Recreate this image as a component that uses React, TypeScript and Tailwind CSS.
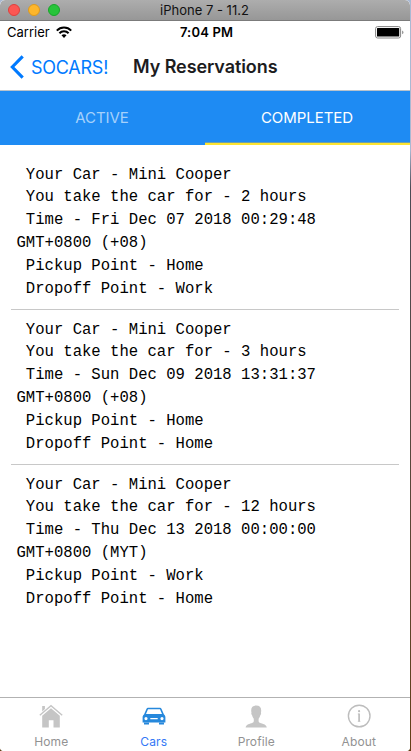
import React from 'react';

const reservations = [
  { hours: '2', time: 'Fri Dec 07 2018 00:29:48', zone: '(+08)', pickup: 'Home', dropoff: 'Work' },
  { hours: '3', time: 'Sun Dec 09 2018 13:31:37', zone: '(+08)', pickup: 'Home', dropoff: 'Home' },
  { hours: '12', time: 'Thu Dec 13 2018 00:00:00', zone: '(MYT)', pickup: 'Work', dropoff: 'Home' },
];

function TitleBar() {
  return (
    <div className="grid h-[21px] grid-cols-3 items-center rounded-t-[5px] border-b border-[#7b7b7b] bg-linear-to-b from-[#adadad] to-[#979797]">
      <div className="flex gap-2 pl-2">
        <span className="size-3 rounded-full border border-[#df403d] bg-[#fc5753]" />
        <span className="size-3 rounded-full border border-[#de9a1c] bg-[#fdb62b]" />
        <span className="size-3 rounded-full border border-[#17a52a] bg-[#27c43a]" />
      </div>
      <span className="whitespace-nowrap pr-px text-center text-[13px] leading-5 text-[#111]">iPhone 7 - 11.2</span>
    </div>
  );
}

function StatusBar() {
  return (
    <div className="grid h-[22px] grid-cols-3 items-center pl-[7px] pr-1.5">
      <div className="flex items-center gap-1.5">
        <span className="text-[13px] leading-5">Carrier</span>
        <svg width="16" height="12" viewBox="0 0 16 12" fill="none" stroke="#000" strokeWidth="2">
          <path d="M.8 4.6C4.7.4 11.3.4 15.2 4.6" />
          <path d="M3.4 7.3c2.5-2.7 6.7-2.7 9.2 0" />
          <path d="M5.5 9.3 8 11.9l2.5-2.6c-1.4-1.3-3.6-1.3-5 0Z" fill="#000" stroke="none" />
        </svg>
      </div>
      <span className="whitespace-nowrap pl-0.5 text-center text-[13px] font-semibold leading-5 tracking-[0.15px]">7:04 PM</span>
      <svg className="justify-self-end" width="29" height="13" viewBox="0 0 29 13">
        <rect x=".6" y=".6" width="25" height="11.4" rx="2" fill="#fff" stroke="#858585" />
        <rect x="2" y="2" width="22.2" height="8.6" rx=".6" />
        <path d="M27.2 4.5c1.7.6 1.7 3.2 0 3.8Z" fill="#858585" />
      </svg>
    </div>
  );
}

function Header() {
  return (
    <header className="flex h-12 items-center border-b border-[#b9c3cc] pl-[10px]">
      <svg width="14" height="24" viewBox="0 0 14 24" fill="none" stroke="#007aff" strokeWidth="3.1">
        <path d="M12.7 1.3 2.3 12l10.4 10.7" />
      </svg>
      <span className="ml-[7px] w-[102px] whitespace-nowrap pt-px text-[18px] tracking-[-0.25px] text-[#007aff]">SOCARS!</span>
      <h1 className="whitespace-nowrap text-[18px] font-semibold tracking-[-0.08px] text-[#1c1c1e]">My Reservations</h1>
    </header>
  );
}

function Tabs() {
  return (
    <div className="grid h-[54px] grid-cols-2 bg-[#1e8bf3] text-[15px] text-white">
      <div className="flex items-center justify-center pr-px tracking-[-0.1px] text-[#a5d1fb]">ACTIVE</div>
      <div className="flex items-center justify-center border-b-2 border-[#fde431] pt-0.5 pr-px tracking-[-0.05px] shadow-[inset_0_-1px_#6f9fa8]">COMPLETED</div>
    </div>
  );
}

const homeIcon = (
  <svg width="24" height="24" viewBox="0 0 24 24" fill="#c5c5c5">
    <path d="M3.2 2h2.7v3L3.2 7.6Z" />
    <path d="M.8 11.2 12 1.7l11.2 9.5" fill="none" stroke="#c5c5c5" strokeWidth="1.4" />
    <path d="M3.2 11.8 12 4.3l8.8 7.5v11.8h-6.3v-7.4H9.8v7.4H3.2Z" />
  </svg>
);

const carIcon = (
  <svg width="24" height="24" viewBox="0 0 24 24" fill="#2688dc">
    <path fillRule="evenodd" d="M6.6 3.8h10.8c1.1 0 1.9.5 2.3 1.4l2.3 5.2c.9.7 1.4 1.6 1.4 2.8v5.3H.6v-5.3c0-1.2.5-2.1 1.4-2.8l2.3-5.2c.4-.9 1.2-1.4 2.3-1.4Zm-.6 1.5L4 9.9h16l-2-4.6ZM4 13a1.6 1.6 0 1 0 0 3.2A1.6 1.6 0 0 0 4 13Zm16 0a1.6 1.6 0 1 0 0 3.2 1.6 1.6 0 0 0 0-3.2ZM8.3 14v1.3h7.4V14Z" />
    <path d="M2 18.4h5v2.1H2Zm15 0h5v2.1h-5Z" />
  </svg>
);

const profileIcon = (
  <svg width="24" height="24" viewBox="0 0 24 24" fill="#c5c5c5">
    <path d="M12.2 1.5c-3.2 0-5 1.9-5 4.7 0 1 .1 1.9.3 2.6-.5.8 0 2.1.7 2.8.3 1.5.9 2.3 1.5 3 .2 2.3.3 3.5-1.2 4.2-2.8 1.3-6.1 1.2-6.9 4.7h21.2c-.8-3.5-4.1-3.4-6.9-4.7-1.5-.7-1.4-1.9-1.2-4.2.6-.7 1.2-1.5 1.5-3 .7-.7 1.2-2 .7-2.8.2-.7.3-1.6.3-2.6 0-2.8-1.8-4.7-5-4.7Z" />
  </svg>
);

const infoIcon = (
  <svg width="24" height="24" viewBox="0 0 24 24" fill="none" stroke="#bdbdbd">
    <circle cx="12.2" cy="12" r="10.8" strokeWidth="1.4" />
    <path d="M12.1 9.6v8" strokeWidth="1.7" />
    <path d="M10.8 10h1.3M10.8 17.4h2.6" strokeWidth=".7" />
    <circle cx="12.1" cy="7.2" r="1.1" fill="#bdbdbd" stroke="none" />
  </svg>
);

const navItems = [
  { label: 'Home', icon: homeIcon },
  { label: 'Cars', icon: carIcon },
  { label: 'Profile', icon: profileIcon },
  { label: 'About', icon: infoIcon },
];

export default function App() {
  return (
    <div className="h-[751px] w-[411px] overflow-hidden bg-linear-to-b from-[#a9b9d3] from-20% via-[#4b4b55] via-25% to-[#634016] pr-px font-['Inter','Liberation_Sans',sans-serif]">
      <div className="flex h-full flex-col overflow-hidden rounded-t-[5px] rounded-b-[4px] bg-white">
        <TitleBar />
        <StatusBar />
        <Header />
        <Tabs />
        <main className="flex-1 px-[11px] pt-[17px] font-['Liberation_Mono',monospace] text-[15.6px] leading-[22.83px] text-black">
          {reservations.map((r) => (
            <section key={r.time} className="mb-[7px] h-[148px] whitespace-pre border-b border-[#c8c8c8] pt-[1.5px] pl-[5.5px] last:border-0">
              <p>{' Your Car - Mini Cooper'}</p>
              <p>{` You take the car for - ${r.hours} hours`}</p>
              <p>{` Time - ${r.time}`}</p>
              <p>{`GMT+0800 ${r.zone}`}</p>
              <p>{` Pickup Point - ${r.pickup}`}</p>
              <p>{` Dropoff Point - ${r.dropoff}`}</p>
            </section>
          ))}
        </main>
        <nav className="grid h-[54px] grid-cols-4 border-t border-[#b2b2b2] bg-white">
          {navItems.map(({ label, icon }) => (
            <div key={label} className={`flex flex-col items-center pt-1.5 ${label === 'Cars' ? 'text-[#3478f6]' : 'text-[#929292]'}`}>
              {icon}
              <span className="mt-1.5 text-[12px] leading-4 tracking-[0.1px]">{label}</span>
            </div>
          ))}
        </nav>
      </div>
    </div>
  );
}
